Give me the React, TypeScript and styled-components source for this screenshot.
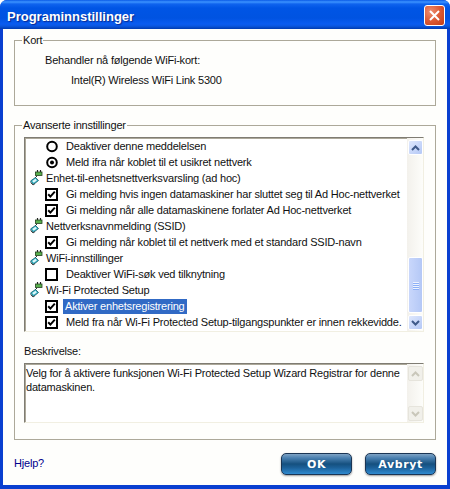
import * as React from "react";
import styled, { createGlobalStyle } from "styled-components";

const GlobalStyle = createGlobalStyle`
  html, body {
    margin: 0;
    padding: 0;
    background: #fff;
  }
  body {
    font-family: "Liberation Sans", "Noto Sans", sans-serif;
    font-size: 11px;
    letter-spacing: -0.2px;
    color: #111;
  }
`;

const Window = styled.div`
  width: 450px;
  height: 489px;
  box-sizing: border-box;
  display: flex;
  flex-direction: column;
  background: #0a3fd0;
  border-radius: 7px 7px 0 0;
  overflow: hidden;
`;

const TitleBar = styled.div`
  height: 29px;
  flex: none;
  display: flex;
  align-items: flex-start;
  justify-content: space-between;
  padding: 0 5px 0 7px;
  background: linear-gradient(
    to bottom,
    #0a5ae6 0,
    #3c93ff 2px,
    #0f63ee 4px,
    #0055e5 8px,
    #0053e1 18px,
    #0a5cf0 24px,
    #0a57e0 26px,
    #003bb0 29px
  );
`;

const Title = styled.div`
  margin-top: 9px;
  line-height: 15px;
  font-family: "Liberation Sans", sans-serif;
  font-weight: 700;
  font-size: 13px;
  letter-spacing: 0;
  color: #fff;
  text-shadow: 1px 1px 1px #0a2a90;
`;

const CloseButton = styled.div`
  width: 21px;
  height: 21px;
  box-sizing: border-box;
  margin-top: 5px;
  border: 1px solid #fff;
  border-radius: 3px;
  display: flex;
  align-items: center;
  justify-content: center;
  background: radial-gradient(circle at 30% 30%, #ee8e70 0, #dc5a35 50%, #c13c15 100%);
`;

const Body = styled.div`
  flex: 1;
  margin: 0 3px 4px 3px;
  padding: 11px 11px 0 11px;
  background: #fefefc;
  display: flex;
  flex-direction: column;
`;

const Group = styled.div<{ $height: number; $gap?: number }>`
  position: relative;
  height: ${(p) => p.$height}px;
  margin-bottom: ${(p) => p.$gap ?? 0}px;
  flex: none;
  box-sizing: border-box;
  width: 422px;
  border: 1px solid #aca899;
  padding: 0 9px;
`;

const Legend = styled.div`
  position: absolute;
  top: -8px;
  left: 7px;
  padding: 0 1px;
  background: #fefefc;
  line-height: 15px;
`;

const CardLabel = styled.div<{ $indent: number; $top: number }>`
  margin-left: ${(p) => p.$indent}px;
  margin-top: ${(p) => p.$top}px;
  line-height: 15px;
`;

const Inset = styled.div<{ $height: number; $top?: number }>`
  height: ${(p) => p.$height}px;
  width: 400px;
  margin-top: ${(p) => p.$top ?? 0}px;
  box-sizing: border-box;
  display: flex;
  border-style: solid;
  border-width: 1px;
  border-color: #7f7c73 #f1efe2 #f1efe2 #7f7c73;
  box-shadow: inset 1px 1px 0 #aca899;
  background: #fff;
`;

const List = styled.div`
  flex: 1;
  min-width: 0;
`;

const Row = styled.div<{ $indent: number }>`
  height: 16px;
  display: flex;
  align-items: center;
  padding-left: ${(p) => p.$indent}px;
  white-space: nowrap;
`;

const RowText = styled.span<{ $selected?: boolean; $gap: number }>`
  line-height: 15px;
  padding: 0 ${(p) => (p.$selected ? 2 : 0)}px;
  margin-left: ${(p) => p.$gap}px;
  background: ${(p) => (p.$selected ? "#316ac5" : "transparent")};
  color: ${(p) => (p.$selected ? "#fff" : "#111")};
`;

const IconSvg = styled.svg`
  flex: none;
  display: block;
`;

const ScrollBar = styled.div`
  width: 16px;
  flex: none;
  display: flex;
  flex-direction: column;
  padding: 2px 0 1px 1px;
  box-sizing: border-box;
  background: linear-gradient(to right, #f3f1ec, #fdfdfa);
`;

const ScrollButton = styled.div<{ $disabled?: boolean }>`
  height: 15px;
  flex: none;
  box-sizing: border-box;
  border-radius: 2px;
  border: 1px solid ${(p) => (p.$disabled ? "#e6e4dc" : "#fff")};
  background: ${(p) =>
    p.$disabled ? "#f1f0ea" : "linear-gradient(135deg, #dfe8fd, #b4c8f6)"};
  display: flex;
  align-items: center;
  justify-content: center;
`;

const Track = styled.div`
  flex: 1;
  display: flex;
  flex-direction: column;
  justify-content: flex-end;
`;

const Thumb = styled.div`
  height: 56px;
  margin-bottom: 2px;
  box-sizing: border-box;
  border: 1px solid #fff;
  border-radius: 2px;
  background: linear-gradient(to right, #c9d7fb, #b4c8f6);
  display: flex;
  flex-direction: column;
  align-items: center;
  justify-content: center;
  gap: 1px;
`;

const Grip = styled.div`
  width: 6px;
  height: 1px;
  background: #eef3fe;
  box-shadow: 0 1px 0 #8cb0f8;
`;

const DescLabel = styled.div`
  margin-top: 12px;
  line-height: 15px;
`;

const DescText = styled.div`
  flex: 1;
  padding: 2px 1px;
  line-height: 14px;
`;

const Footer = styled.div`
  flex: 1;
  width: 422px;
  display: flex;
  align-items: flex-start;
  justify-content: space-between;
  padding-top: 13px;
  box-sizing: border-box;
`;

const HelpLink = styled.a`
  color: #00008c;
  margin-top: 3px;
  line-height: 15px;
`;

const Buttons = styled.div`
  display: flex;
  gap: 13px;
`;

const ActionButton = styled.div`
  width: 71px;
  height: 22px;
  box-sizing: border-box;
  border: 1px solid #1b3554;
  border-radius: 5px;
  display: flex;
  align-items: center;
  justify-content: center;
  color: #fff;
  font-family: "DejaVu Sans", sans-serif;
  font-weight: 700;
  font-size: 11px;
  letter-spacing: 0.6px;
  background: linear-gradient(
    to bottom,
    #7fa3c4 0,
    #4a80b0 20%,
    #15507f 50%,
    #1c6098 68%,
    #2f8ad0 100%
  );
  box-shadow: 0 1px 2px #9a9a9a;
`;

const WifiIcon = () => (
  <IconSvg width="14" height="16" viewBox="0 0 14 16">
    <path d="M7.5 0v2M10.5 0v2" stroke="#222" strokeWidth="1.2" />
    <rect x="5.5" y="2" width="6.5" height="3.5" fill="#58b04e" stroke="#24401f" strokeWidth="0.8" />
    <path d="M7 6L5 8" stroke="#333" strokeWidth="1" />
    <path d="M0.5 11l5-3.5 3 3-5 4z" fill="#2fb2c4" stroke="#155a68" strokeWidth="0.8" />
    <path d="M2.2 11l3.2-2.2 1.5 1.6-3.2 2.3z" fill="#dff6f9" />
    <path d="M0.5 12.5l2.5 2.5 2-1.5" fill="none" stroke="#4a4a4a" strokeWidth="1" />
  </IconSvg>
);

const CheckBox = ({ checked }: { checked: boolean }) => (
  <IconSvg width="13" height="13" viewBox="0 0 13 13">
    <rect x="1" y="1" width="11" height="11" fill="#fff" stroke="#000" strokeWidth="2" />
    {checked && <path d="M3.2 6.2l2.2 2.4 4.4-5" fill="none" stroke="#000" strokeWidth="2" />}
  </IconSvg>
);

const Radio = ({ checked }: { checked: boolean }) => (
  <IconSvg width="13" height="13" viewBox="0 0 13 13">
    <circle cx="7" cy="6.5" r="4.8" fill="#fff" stroke="#000" strokeWidth="2" />
    {checked && <circle cx="7" cy="6.5" r="2" fill="#000" />}
  </IconSvg>
);

const Arrow = ({ up, color }: { up: boolean; color: string }) => (
  <svg width="9" height="6" viewBox="0 0 9 6">
    <path
      d={up ? "M1 5l3.5-3.5L8 5" : "M1 1l3.5 3.5L8 1"}
      fill="none"
      stroke={color}
      strokeWidth="2"
    />
  </svg>
);

type Item =
  | { kind: "head"; text: string }
  | { kind: "radio" | "check"; text: string; on: boolean; selected?: boolean };

const items: Item[] = [
  { kind: "radio", text: "Deaktiver denne meddelelsen", on: false },
  { kind: "radio", text: "Meld ifra når koblet til et usikret nettverk", on: true },
  { kind: "head", text: "Enhet-til-enhetsnettverksvarsling (ad hoc)" },
  { kind: "check", text: "Gi melding hvis ingen datamaskiner har sluttet seg til Ad Hoc-nettverket", on: true },
  { kind: "check", text: "Gi melding når alle datamaskinene forlater Ad Hoc-nettverket", on: true },
  { kind: "head", text: "Nettverksnavnmelding (SSID)" },
  { kind: "check", text: "Gi melding når koblet til et nettverk med et standard SSID-navn", on: true },
  { kind: "head", text: "WiFi-innstillinger" },
  { kind: "check", text: "Deaktiver WiFi-søk ved tilknytning", on: false },
  { kind: "head", text: "Wi-Fi Protected Setup" },
  { kind: "check", text: "Aktiver enhetsregistrering", on: true, selected: true },
  { kind: "check", text: "Meld fra når Wi-Fi Protected Setup-tilgangspunkter er innen rekkevidde.", on: true },
];

export default function App() {
  return (
    <>
      <GlobalStyle />
      <Window>
        <TitleBar>
          <Title>Programinnstillinger</Title>
          <CloseButton>
            <svg width="13" height="13" viewBox="0 0 13 13">
              <path d="M2 2l9 9M11 2l-9 9" stroke="#fff" strokeWidth="2" />
            </svg>
          </CloseButton>
        </TitleBar>
        <Body>
          <Group $height={66} $gap={19}>
            <Legend>Kort</Legend>
            <CardLabel $indent={21} $top={12}>Behandler nå følgende WiFi-kort:</CardLabel>
            <CardLabel $indent={47} $top={5}>Intel(R) Wireless WiFi Link 5300</CardLabel>
          </Group>
          <Group $height={315}>
            <Legend>Avanserte innstillinger</Legend>
            <Inset $height={195} $top={11}>
              <List>
                {items.map((it) =>
                  it.kind === "head" ? (
                    <Row key={it.text} $indent={5}>
                      <WifiIcon />
                      <RowText $gap={2}>{it.text}</RowText>
                    </Row>
                  ) : (
                    <Row key={it.text} $indent={20}>
                      {it.kind === "radio" ? <Radio checked={it.on} /> : <CheckBox checked={it.on} />}
                      <RowText $selected={it.selected} $gap={it.selected ? 5 : 8}>{it.text}</RowText>
                    </Row>
                  )
                )}
              </List>
              <ScrollBar>
                <ScrollButton>
                  <Arrow up color="#3f5a8a" />
                </ScrollButton>
                <Track>
                  <Thumb>
                    <Grip />
                    <Grip />
                    <Grip />
                    <Grip />
                  </Thumb>
                </Track>
                <ScrollButton>
                  <Arrow up={false} color="#3f5a8a" />
                </ScrollButton>
              </ScrollBar>
            </Inset>
            <DescLabel>Beskrivelse:</DescLabel>
            <Inset $height={60} $top={4}>
              <DescText>
                Velg for å aktivere funksjonen Wi-Fi Protected Setup Wizard Registrar for denne datamaskinen.
              </DescText>
              <ScrollBar>
                <ScrollButton $disabled>
                  <Arrow up color="#c9c7ba" />
                </ScrollButton>
                <Track />
                <ScrollButton $disabled>
                  <Arrow up={false} color="#c9c7ba" />
                </ScrollButton>
              </ScrollBar>
            </Inset>
          </Group>
          <Footer>
            <HelpLink>Hjelp?</HelpLink>
            <Buttons>
              <ActionButton>OK</ActionButton>
              <ActionButton>Avbryt</ActionButton>
            </Buttons>
          </Footer>
        </Body>
      </Window>
    </>
  );
}
